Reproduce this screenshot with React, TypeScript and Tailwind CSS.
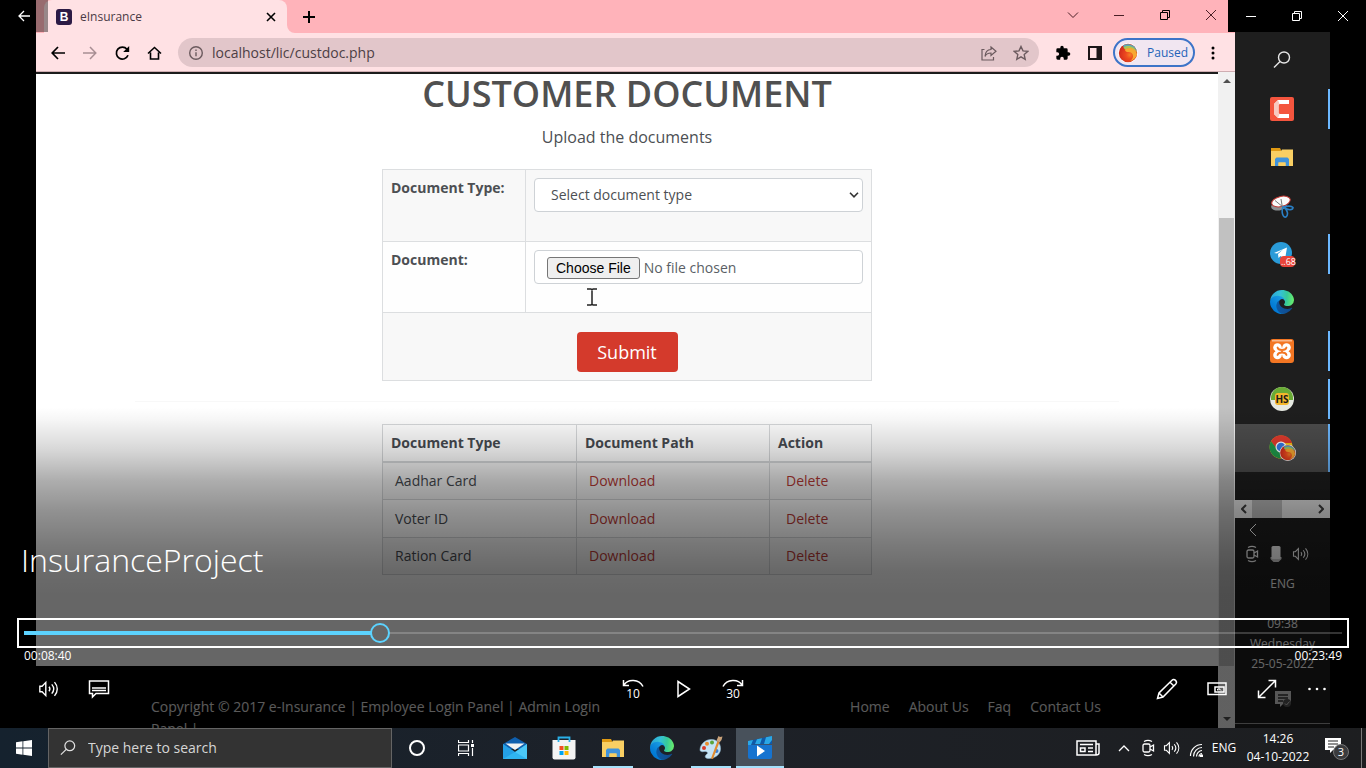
import React, { useState } from "react";
import type { ReactNode } from "react";

type IconProps = { className?: string };

/* ---------- shared drawings ---------- */

function EdgeLogo({ className = "size-6", id }: IconProps & { id: string }) {
  return (
    <svg className={className} viewBox="0 0 256 256" aria-hidden="true">
      <defs>
        <linearGradient id={`${id}a`} x1="60" y1="178" x2="232" y2="178" gradientUnits="userSpaceOnUse">
          <stop offset="0" stopColor="#0c59a4" />
          <stop offset="1" stopColor="#114a8b" />
        </linearGradient>
        <linearGradient id={`${id}b`} x1="157" y1="100" x2="46" y2="221" gradientUnits="userSpaceOnUse">
          <stop offset="0" stopColor="#1b9de2" />
          <stop offset=".2" stopColor="#1595df" />
          <stop offset=".7" stopColor="#0680d7" />
          <stop offset="1" stopColor="#0078d4" />
        </linearGradient>
        <linearGradient id={`${id}c`} x1="10" y1="60" x2="250" y2="90" gradientUnits="userSpaceOnUse">
          <stop offset="0" stopColor="#2aa6d6" />
          <stop offset=".4" stopColor="#35c1d6" />
          <stop offset=".7" stopColor="#36c99a" />
          <stop offset="1" stopColor="#66eb6e" />
        </linearGradient>
      </defs>
      <path fill={`url(#${id}a)`} d="M231.05 190.54c-3.38 1.76-6.86 3.33-10.42 4.7a101.16 101.16 0 0 1-35.62 6.46c-46.95 0-87.84-32.3-87.84-73.74a31.32 31.32 0 0 1 16.33-27.26c-42.46 1.78-53.37 46.03-53.37 71.95 0 73.3 67.55 80.73 82.1 80.73 7.85 0 19.68-2.28 26.78-4.53l1.3-.43a128.34 128.34 0 0 0 66.6-52.8 4 4 0 0 0-5.86-5.08z" />
      <path fill={`url(#${id}b)`} d="M105.73 241.42a79.2 79.2 0 0 1-22.74-21.34 80.72 80.72 0 0 1 29.53-120c3.12-1.47 8.45-4.13 15.54-4a32.35 32.35 0 0 1 25.68 13.06 31.88 31.88 0 0 1 6.36 18.66c0-.21 24.46-79.6-80-79.6-43.9 0-80 41.66-80 78.21a130.15 130.15 0 0 0 12.12 56 128 128 0 0 0 156.38 67.11 75.55 75.55 0 0 1-62.78-8.04z" />
      <path fill={`url(#${id}c)`} d="M152.33 148.86c-.8 1.05-3.3 2.5-3.3 5.66 0 2.6 1.7 5.12 4.72 7.22 14.38 10 41.49 8.69 41.56 8.69a59.57 59.57 0 0 0 30.26-8.35A61.38 61.38 0 0 0 256 109.3c.26-22.41-8-37.31-11.34-43.9C223.47 23.96 177.72 0 128 0A128 128 0 0 0 0 126.2c.48-36.54 36.8-66.05 80-66.05 3.5 0 23.46.34 42 10.07 16.34 8.58 24.9 18.94 30.85 29.21 6.18 10.67 7.28 24.15 7.28 29.52s-2.74 13.33-7.8 19.91z" />
    </svg>
  );
}

function FolderIcon({ className = "h-6 w-6" }: IconProps) {
  return (
    <svg className={className} viewBox="0 0 24 24" aria-hidden="true">
      <path fill="#e09a13" d="M1 3h9l1 2v5H1z" />
      <path fill="#f9cf63" d="M1 6h10l1-1.500h11V21H1z" />
      <path fill="#3f93dc" d="M5 21v-7l1.500-1.500h11L19 14v7h-3.500v-3.500h-7V21z" />
      <path fill="#f9cf63" d="M8.500 17.500h7V21h-7z" />
    </svg>
  );
}

function SwirlBall({ id }: { id: string }) {
  return (
    <g>
      <defs>
        <radialGradient id={id} cx=".6" cy=".6" r=".62">
          <stop offset="0" stopColor="#f57c22" />
          <stop offset=".35" stopColor="#ee4a1f" />
          <stop offset="1" stopColor="#cf2a1c" />
        </radialGradient>
      </defs>
      <circle cx="10" cy="10" r="10" fill="#fff" />
      <circle cx="10" cy="10" r="9.200" fill={`url(#${id})`} />
      <path fill="#5aa9b8" d="M5 2.500C9-.2 17 .8 19 8c-4-5-9-5.500-13-3z" />
      <path fill="#a9c558" d="M5.500 4.500C10 1.500 17 3 19.200 9.500c-4-4.500-8-5-12.200-3z" />
      <path fill="#f7a830" d="M7 6.500c5-3 11-1 12 5-1.500 4-4 6-7 6.500 5-3 3.500-9-1.500-9C8.500 9 7 8.500 7 6.500z" />
    </g>
  );
}

function VolumeIcon({ className = "h-5 w-6" }: IconProps) {
  return (
    <svg className={className} viewBox="0 0 24 20" fill="none" stroke="currentColor" strokeWidth="1.500" aria-hidden="true">
      <path d="M2 7h2.500l4-4.200v14.400l-4-4.200H2z" />
      <path d="M12 7.500c1.200 1.500 1.200 3.500 0 5M15 5c2.600 3 2.600 7 0 10M18 2.500c4 4.500 4 10.500 0 15" />
    </svg>
  );
}

function SearchIcon({ className }: IconProps) {
  return (
    <svg className={className} viewBox="0 0 18 18" fill="none" stroke="currentColor" strokeWidth="1.400" aria-hidden="true">
      <circle cx="11" cy="6.500" r="5.500" />
      <path d="M7 10.500l-6 6" />
    </svg>
  );
}

function MeetNowIcon({ className = "h-5 w-4" }: IconProps) {
  return (
    <svg className={className} viewBox="0 0 16 20" fill="none" stroke="currentColor" strokeWidth="1.300" aria-hidden="true">
      <rect x="3" y="6" width="7" height="8" rx="1.500" />
      <path d="M10 9l3.500-2v6L10 11M4 3.500c2.500-1.400 5.500-1.400 8 0M4 16.500c2.500 1.400 5.500 1.400 8 0" />
    </svg>
  );
}

function RestoreIcon() {
  return (
    <svg className="size-3" viewBox="0 0 12 12" fill="none" stroke="currentColor" aria-hidden="true">
      <path d="M1.500 3.500h7v7h-7zM3.500 3.500v-2h7v7h-2" />
    </svg>
  );
}

function CloseIcon() {
  return (
    <svg className="size-3" viewBox="0 0 12 12" fill="none" stroke="currentColor" aria-hidden="true">
      <path d="M1 1l10 10M11 1L1 11" />
    </svg>
  );
}

function MinusIcon() {
  return (
    <svg className="size-3" viewBox="0 0 12 12" stroke="currentColor" aria-hidden="true">
      <path d="M1 6.500h10" />
    </svg>
  );
}

/* ---------- browser ---------- */

function PlainButton({ label, className = "", children }: { label: string; className?: string; children: ReactNode }) {
  return (
    <button type="button" aria-label={label} className={`flex shrink-0 items-center justify-center ${className}`}>
      {children}
    </button>
  );
}

function TabStrip() {
  return (
    <div className="flex h-[33px] items-stretch bg-[#ffb3ba] pl-2">
      <div className="relative flex w-[243px] items-center gap-2 rounded-t-lg bg-[#ffe1e4] pt-px pr-2.5 pl-3">
        <span className="flex size-4 items-center justify-center rounded-[3px] bg-[#2c1a45] font-['Liberation_Sans',sans-serif] text-xs font-bold text-white">B</span>
        <span className="flex-1 text-xs text-[#4a3a45]">eInsurance</span>
        <PlainButton label="Close tab" className="size-3 text-black">
          <svg className="size-3" viewBox="0 0 12 12" stroke="currentColor" strokeWidth="1.600" aria-hidden="true">
            <path d="M2 2l8 8M10 2l-8 8" />
          </svg>
        </PlainButton>
        <svg className="absolute bottom-0 left-full size-2" viewBox="0 0 8 8" aria-hidden="true">
          <path fill="#ffe1e4" d="M0 0a8 8 0 0 0 8 8H0z" />
        </svg>
      </div>
      <PlainButton label="New tab" className="w-11 text-black">
        <svg className="size-3.5" viewBox="0 0 14 14" stroke="currentColor" strokeWidth="2" aria-hidden="true">
          <path d="M7 1v12M1 7h12" />
        </svg>
      </PlainButton>
      <div className="flex flex-1 items-center justify-end pr-px pb-1 text-[#4a1f26]">
        <PlainButton label="Search tabs" className="w-[46px]">
          <svg className="h-2 w-3" viewBox="0 0 12 8" fill="none" stroke="currentColor" aria-hidden="true">
            <path d="M1 1.500l5 5 5-5" />
          </svg>
        </PlainButton>
        <PlainButton label="Minimize browser" className="w-[46px]"><MinusIcon /></PlainButton>
        <PlainButton label="Restore browser" className="w-[46px] text-black"><RestoreIcon /></PlainButton>
        <PlainButton label="Close browser" className="w-[46px]"><CloseIcon /></PlainButton>
      </div>
    </div>
  );
}

function Toolbar() {
  return (
    <div className="flex h-[39px] items-center border-b border-[#cfaeb2] bg-[#ffe1e4] pt-px pr-4 pl-1.5 text-black">
      <PlainButton label="Back" className="w-8">
        <svg className="size-3.5" viewBox="0 0 14 14" fill="none" stroke="currentColor" strokeWidth="1.700" aria-hidden="true">
          <path d="M14 7H1.500M7 1L1.200 7 7 13" />
        </svg>
      </PlainButton>
      <PlainButton label="Forward" className="w-8 text-[#a88e93]">
        <svg className="size-3.5" viewBox="0 0 14 14" fill="none" stroke="currentColor" strokeWidth="1.500" aria-hidden="true">
          <path d="M0 7h12.500M7 1l5.800 6L7 13" />
        </svg>
      </PlainButton>
      <PlainButton label="Reload" className="w-8">
        <svg className="size-4" viewBox="0 0 16 16" fill="none" stroke="currentColor" strokeWidth="1.700" aria-hidden="true">
          <path d="M14 10.200A6 6 0 1 1 13 4.200" />
          <path d="M15.200 1v6H9.200z" fill="currentColor" stroke="none" />
        </svg>
      </PlainButton>
      <PlainButton label="Home" className="w-8">
        <svg className="size-4" viewBox="0 0 16 16" fill="none" stroke="currentColor" strokeWidth="1.600" aria-hidden="true">
          <path d="M2 8.500l6.500-6 6.500 6M4.500 7.500V14h8V7.500" />
        </svg>
      </PlainButton>
      <div className="ml-2 flex h-[29px] min-w-0 flex-1 items-center gap-2 rounded-full bg-[#e2c6ca] pr-2.5 pl-2.5 text-[#6b5a5e]">
        <svg className="size-4 shrink-0" viewBox="0 0 16 16" fill="none" stroke="currentColor" strokeWidth="1.400" aria-hidden="true">
          <circle cx="8" cy="8" r="6.300" />
          <path d="M8 7.200v4M8 4.600v1.400" />
        </svg>
        <input aria-label="Address" defaultValue="localhost/lic/custdoc.php" className="min-w-0 flex-1 bg-transparent text-sm text-[#4d3f45] outline-none" />
        <PlainButton label="Share" className="w-8">
          <svg className="size-4" viewBox="0 0 16 16" fill="none" stroke="currentColor" strokeWidth="1.200" aria-hidden="true">
            <path d="M3.500 4.500H1V15h11.500v-3M10 2l5 4.200-5 4.300V8c-3 0-5 1-6 3.500C4.200 7.500 6.500 4.700 10 4.500z" />
          </svg>
        </PlainButton>
        <PlainButton label="Bookmark" className="w-4">
          <svg className="size-4" viewBox="0 0 16 16" fill="none" stroke="currentColor" strokeWidth="1.400" aria-hidden="true">
            <path d="M8 1.500l2 4.400 4.700.5-3.500 3.200 1 4.700L8 11.900l-4.200 2.400 1-4.700L1.300 6.400l4.700-.5z" />
          </svg>
        </PlainButton>
      </div>
      <PlainButton label="Extensions" className="ml-2 w-8">
        <svg className="size-4" viewBox="0 0 24 24" fill="currentColor" aria-hidden="true">
          <path d="M20.500 11H19V7a2 2 0 0 0-2-2h-4V3.500a2.500 2.500 0 0 0-5 0V5H4a2 2 0 0 0-2 2v3.800h1.500a2.700 2.700 0 0 1 0 5.400H2V20a2 2 0 0 0 2 2h3.800v-1.500a2.700 2.700 0 0 1 5.400 0V22H17a2 2 0 0 0 2-2v-4h1.500a2.500 2.500 0 0 0 0-5z" />
        </svg>
      </PlainButton>
      <PlainButton label="Side panel" className="w-8">
        <svg className="size-4" viewBox="0 0 16 16" aria-hidden="true">
          <path fill="#1c1618" d="M1 1h14v14H1zM3 3v10h6.500V3z" fillRule="evenodd" />
        </svg>
      </PlainButton>
      <button type="button" className="ml-0.5 flex h-[29px] w-[82px] shrink-0 items-center gap-2 rounded-full border-2 border-[#3d74c8] bg-[#f1e6f1] pl-0.5 text-xs text-[#2463b8]">
        <svg className="size-[22px] shrink-0" viewBox="-1 -1 22 22" aria-hidden="true"><SwirlBall id="avatar" /></svg>
        Paused
      </button>
      <PlainButton label="Browser menu" className="ml-3 w-3">
        <svg className="h-4 w-1" viewBox="0 0 4 16" fill="currentColor" aria-hidden="true">
          <circle cx="2" cy="3" r="1.500" /><circle cx="2" cy="8" r="1.500" /><circle cx="2" cy="13" r="1.500" />
        </svg>
      </PlainButton>
    </div>
  );
}

const documents = ["Aadhar Card", "Voter ID", "Ration Card"];

function DocumentPage() {
  return (
    <div className="flex min-w-0 flex-1 flex-col overflow-hidden border-t-2 border-[#1c1c1c] bg-white font-['Open_Sans',sans-serif] text-[#4c4f53]">
      <main className="mx-auto flex w-full max-w-[984px] shrink-0 flex-col items-center pb-[91px]">
        <h2 className="text-4xl leading-10 font-semibold text-[#505050]">CUSTOMER DOCUMENT</h2>
        <p className="mt-[11px] text-base leading-6">Upload the documents</p>
        <form className="mt-5 w-[490px]" onSubmit={(e) => e.preventDefault()}>
          <table className="w-full table-fixed border-collapse border border-[#d9dbdd] text-sm">
            <colgroup><col className="w-[143px]" /><col /></colgroup>
            <tbody className="align-top">
              <tr className="h-[72px] bg-[#f8f8f8]">
                <th scope="row" className="border border-[#dcdee0] p-2 text-left font-bold">
                  <label htmlFor="doctype">Document Type:</label>
                </th>
                <td className="border border-[#dcdee0] p-2">
                  <div className="relative">
                    <select id="doctype" className="block h-[34px] w-full appearance-none rounded border border-[#ced2d6] bg-white px-4 text-sm">
                      <option>Select document type</option>
                      {documents.map((d) => <option key={d}>{d}</option>)}
                    </select>
                    <svg className="pointer-events-none absolute top-3.5 right-1 h-1.5 w-2.5" viewBox="0 0 10 6" fill="none" stroke="#333" strokeWidth="1.600" aria-hidden="true">
                      <path d="M1 .8l4 4 4-4" />
                    </svg>
                  </div>
                </td>
              </tr>
              <tr className="h-[71px] bg-[#fefefe]">
                <th scope="row" className="border border-[#dcdee0] p-2 text-left font-bold">
                  <label htmlFor="docfile">Document:</label>
                </th>
                <td className="relative border border-[#dcdee0] p-2">
                  <input
                    id="docfile"
                    type="file"
                    className="block h-[34px] w-full rounded border border-[#ced2d6] bg-white px-3 py-1.5 text-sm leading-5 text-[#5a5f66] file:mr-1 file:h-[22px] file:rounded-[3px] file:border file:border-solid file:border-[#767676] file:bg-[#efefef] file:px-2 file:font-['Liberation_Sans',sans-serif] file:text-sm file:leading-5 file:text-black"
                  />
                  <svg className="absolute top-[46px] left-[60px] h-[18px] w-3" viewBox="0 0 12 18" fill="none" stroke="#222" strokeWidth="1.500" aria-hidden="true">
                    <path d="M1 1h4l1 1 1-1h4M6 1.500v15M1 17h4l1-1 1 1h4" />
                  </svg>
                </td>
              </tr>
              <tr className="h-[68px] bg-[#f8f8f8]">
                <td colSpan={2} className="border border-[#dcdee0] pt-[19px] text-center">
                  <button type="submit" className="h-10 w-[101px] rounded bg-[#d43a2c] text-lg text-white">Submit</button>
                </td>
              </tr>
            </tbody>
          </table>
        </form>
        <hr className="mt-5 w-full border-[#f8f8f8]" />
        <table className="mt-[22px] w-[490px] table-fixed border-collapse border border-[#d6d8da] text-left text-sm text-[#464a50]">
          <thead>
            <tr className="h-[37px]">
              <th className="w-[194px] border border-b-2 border-[#d6d8da] px-2 font-bold">Document Type</th>
              <th className="w-[193px] border border-b-2 border-[#d6d8da] px-2 font-bold">Document Path</th>
              <th className="border border-b-2 border-[#d6d8da] px-2 font-bold">Action</th>
            </tr>
          </thead>
          <tbody>
            {documents.map((d) => (
              <tr key={d} className="h-[38px] last:h-[37px] odd:bg-[#f8f8f8]">
                <td className="border border-[#d6d8da] px-3">{d}</td>
                <td className="border border-[#d6d8da] px-3"><a href="#download" className="text-[#b93a36]">Download</a></td>
                <td className="border border-[#d6d8da] px-4"><a href="#delete" className="text-[#b93a36]">Delete</a></td>
              </tr>
            ))}
          </tbody>
        </table>
      </main>
      <footer className="flex-1 overflow-hidden bg-black pt-[30px] text-[#e0e0e0]">
        <div className="mx-auto flex max-w-[984px] items-start justify-between px-4 text-sm leading-[22px]">
          <p className="w-[470px]">
            Copyright © 2017 e-Insurance | <a href="#employee">Employee Login Panel</a> | <a href="#admin">Admin Login Panel</a> |
          </p>
          <nav className="flex gap-[19px] pr-0.5">
            <a href="#home">Home</a>
            <a href="#about">About Us</a>
            <a href="#faq">Faq</a>
            <a href="#contact">Contact Us</a>
          </nav>
        </div>
      </footer>
    </div>
  );
}

function PageScrollbar() {
  return (
    <div className="flex w-[17px] shrink-0 flex-col items-center bg-[#f1f1f1] text-[#505050]">
      <svg className="mt-1.5 h-1.5 w-2" viewBox="0 0 8 6" fill="currentColor" aria-hidden="true"><path d="M0 5l4-4 4 4z" /></svg>
      <div className="mt-[134px] mb-[50px] w-[15px] flex-1 bg-[#c1c1c1]" />
      <svg className="mb-1.5 h-1.5 w-2" viewBox="0 0 8 6" fill="currentColor" aria-hidden="true"><path d="M0 1l4 4 4-4z" /></svg>
    </div>
  );
}

function Browser() {
  return (
    <section className="flex min-w-0 flex-1 flex-col">
      <TabStrip />
      <Toolbar />
      <div className="flex min-h-0 flex-1">
        <DocumentPage />
        <PageScrollbar />
      </div>
    </section>
  );
}

/* ---------- vertical taskbar of the recorded desktop ---------- */

function CamtasiaIcon() {
  return (
    <svg className="size-6" viewBox="0 0 24 24" aria-hidden="true">
      <rect width="24" height="24" rx="2" fill="#f4553e" />
      <path fill="#fff" d="M8 3h11v4H9.500L8.500 8v8l1 1H19v4H8l-4-4V7z" />
      <path fill="#f8c9c0" d="M4 7l4-4 1.500 4-1 1v8l1 1L8 21l-4-4z" />
    </svg>
  );
}

function SnipIcon() {
  return (
    <svg className="size-6" viewBox="0 0 24 24" aria-hidden="true">
      <ellipse cx="9" cy="12" rx="8" ry="4.500" fill="#8b8f92" transform="rotate(-8 9 12)" />
      <ellipse cx="11" cy="7.500" rx="9.500" ry="5" fill="#fbfbfb" stroke="#c33a34" transform="rotate(-14 11 7.500)" />
      <path d="M12.500 14L11 5M13 13L5 6.500" stroke="#777" />
      <path d="M13 13c4-1 8-2 10 .5 0 3-5 3-9 0 3 2 5 7 2 9.500-3 1-5-5-3-10z" fill="none" stroke="#2a7fc4" strokeWidth="1.600" />
    </svg>
  );
}

function TelegramIcon() {
  return (
    <svg className="size-7" viewBox="0 0 28 28" aria-hidden="true">
      <circle cx="13" cy="13" r="11" fill="#2a9bd8" />
      <path fill="#fff" d="M6 13l13-5.500-2 12-4.500-3.500-2 2-.5-4 5-4.500-6 4z" />
      <rect x="12" y="16" width="15" height="11" rx="4" fill="#e8443a" />
      <text x="13" y="25" fill="#fff" fontSize="9" fontFamily="Open Sans">..68</text>
    </svg>
  );
}

function XamppIcon() {
  return (
    <svg className="size-6" viewBox="0 0 24 24" aria-hidden="true">
      <rect width="24" height="24" rx="3" fill="#f37623" />
      <path d="M2 1.800h20" stroke="#fbc9a4" strokeWidth="1.200" />
      <g fill="#fff">
        <circle cx="7.500" cy="8.500" r="4.300" /><circle cx="16.500" cy="8.500" r="4.300" />
        <circle cx="7.500" cy="16" r="4.300" /><circle cx="16.500" cy="16" r="4.300" />
        <path d="M7 9h10v7H7z" />
      </g>
      <path d="M7.500 8.500c.5 2 1.500 2.500 4.500 2.500s4-.5 4.500-2.500M7.500 16c.5-2 1.500-2.500 4.500-2.500s4 .5 4.500 2.500M12 11v2.500" fill="none" stroke="#f37623" strokeWidth="1.800" strokeLinecap="round" />
      <path fill="#f37623" d="M2.500 12.200l2.500-.8v1.700zM21.500 12.200l-2.500-.8v1.700z" />
    </svg>
  );
}

function HeidiIcon() {
  return (
    <svg className="size-6" viewBox="0 0 24 24" aria-hidden="true">
      <circle cx="12" cy="12" r="12" fill="#e6e9e2" />
      <path fill="#69ab35" d="M1 11a11 11 0 0 1 22 0v2H1z" />
      <rect x="5" y="6" width="14" height="12" rx="3" fill="#f3b72c" />
      <text x="12" y="16" textAnchor="middle" fontSize="10" fontWeight="700" fontFamily="Open Sans" fill="#1a1a1a">HS</text>
    </svg>
  );
}

function ChromeIcon() {
  return (
    <svg className="size-7" viewBox="0 0 28 28" aria-hidden="true">
      <circle cx="13" cy="13" r="11.500" fill="#fbc116" />
      <path fill="#e33b2e" d="M3 7.300A11.500 11.500 0 0 1 24 9H13a5 5 0 0 0-4.500 6z" />
      <path fill="#1f9a4b" d="M3 7.300A11.500 11.500 0 0 0 12 24.500L17 16l-8-1z" />
      <circle cx="13" cy="13" r="5.500" fill="#fff" />
      <circle cx="13" cy="13" r="4.300" fill="#3579e6" />
      <svg x="11.500" y="10.500" width="16.500" height="16.500" viewBox="0 0 20 20"><SwirlBall id="badge" /></svg>
    </svg>
  );
}

const sideApps: { name: string; icon: ReactNode; open?: boolean; active?: boolean }[] = [
  { name: "Search", icon: <SearchIcon className="size-[18px] text-[#e5e5e5]" /> },
  { name: "Camtasia", icon: <CamtasiaIcon />, open: true },
  { name: "File Explorer", icon: <FolderIcon /> },
  { name: "Snipping Tool", icon: <SnipIcon /> },
  { name: "Telegram", icon: <TelegramIcon />, open: true },
  { name: "Edge", icon: <EdgeLogo id="side" /> },
  { name: "XAMPP", icon: <XamppIcon />, open: true },
  { name: "HeidiSQL", icon: <HeidiIcon />, open: true },
  { name: "Chrome", icon: <ChromeIcon />, active: true },
];

function SideTaskbar() {
  return (
    <aside className="flex w-[95px] shrink-0 flex-col bg-[#1e1e1e] pt-9 text-white">
      <div className="flex h-[436px] shrink-0 flex-col">
        {sideApps.map((app) => (
          <button
            key={app.name}
            type="button"
            aria-label={app.name}
            className={`flex flex-1 items-center ${app.active ? "bg-[#4c4c4c]" : ""}`}
          >
            <span className="flex flex-1 justify-center">{app.icon}</span>
            <span className={`w-0.5 ${app.active ? "h-full bg-[#6cb8ff]" : app.open ? "h-10 bg-[#6cb8ff]" : "h-10"}`} />
          </button>
        ))}
      </div>
      <div className="mt-7 flex h-[18px] shrink-0 items-center justify-between bg-[#f1f1f1] px-1.5 text-[#404040]">
        <svg className="h-2.5 w-1.5" viewBox="0 0 6 10" fill="none" stroke="currentColor" strokeWidth="2" aria-hidden="true"><path d="M5 1L1 5l4 4" /></svg>
        <span className="mr-8 h-full w-[30px] bg-[#c1c1c1]" />
        <svg className="h-2.5 w-1.5" viewBox="0 0 6 10" fill="none" stroke="currentColor" strokeWidth="2" aria-hidden="true"><path d="M1 1l4 4-4 4" /></svg>
      </div>
      <div className="flex flex-1 flex-col items-center pt-1.5">
        <svg className="mr-[60px] h-3 w-2 shrink-0" viewBox="0 0 8 12" fill="none" stroke="currentColor" aria-hidden="true"><path d="M7 0L1 6l6 6" /></svg>
        <div className="mt-2 mr-3 flex items-center gap-2">
          <MeetNowIcon />
          <svg className="h-5 w-4" viewBox="0 0 16 20" fill="currentColor" aria-hidden="true">
            <rect x="3.500" y="2" width="9" height="13" rx="1.500" /><path d="M2.500 13h11v2l-3 3h-5l-3-3z" opacity=".8" />
          </svg>
          <VolumeIcon className="h-4 w-[18px]" />
        </div>
        <span className="mt-2.5 text-xs leading-5">ENG</span>
        <time className="mt-5 text-center text-xs leading-5">09:38<br />Wednesday<br />25-05-2022</time>
        <svg className="mt-4 h-[18px] w-[18px] shrink-0" viewBox="0 0 18 18" aria-hidden="true">
          <path fill="#d8d8d8" d="M1 1h16v13H9l-3 3v-3H1z" />
          <path stroke="#333" strokeWidth="1.300" d="M4 5h10M4 8h10M4 11h5" />
          <circle cx="13" cy="13" r="4" fill="#555" />
          <path d="M11 13.500l1.500 1.500 3-3.500" stroke="#ccc" fill="none" />
        </svg>
        <span className="mt-auto mb-1 h-px w-full shrink-0 bg-[#9a9a9a]" />
      </div>
    </aside>
  );
}

/* ---------- player overlay ---------- */

function SkipIcon({ seconds, forward = false }: { seconds: number; forward?: boolean }) {
  return (
    <svg className="size-6" viewBox="0 0 24 24" fill="none" stroke="currentColor" strokeWidth="1.500" aria-hidden="true">
      {forward ? <path d="M2 9.500C6 2 17 1.500 21 8M21.500 3v5.500H16" /> : <path d="M22 9.500C18 2 7 1.500 3 8M2.500 3v5.500H8" />}
      <text x="12" y="21" textAnchor="middle" fontSize="12" fontFamily="Open Sans" fontWeight="500" fill="currentColor" stroke="none">{seconds}</text>
    </svg>
  );
}

function PlayerButton({ label, children }: { label: string; children: ReactNode }) {
  return (
    <button type="button" aria-label={label} className="flex h-[52px] w-[50px] items-center justify-center">
      {children}
    </button>
  );
}

function PlayerOverlay() {
  const total = 1949;
  const [position, setPosition] = useState(520);
  return (
    <div className="absolute inset-0 flex flex-col justify-between text-white">
      <div className="flex h-8 justify-between">
        <button type="button" aria-label="Back" className="flex w-12 items-center justify-center bg-black/40">
          <svg className="size-3" viewBox="0 0 12 12" fill="none" stroke="currentColor" strokeWidth="1.300" aria-hidden="true">
            <path d="M12 6H1M6 1L1 6l5 5" />
          </svg>
        </button>
        <div className="flex bg-black">
          <PlainButton label="Minimize" className="w-[46px]"><MinusIcon /></PlainButton>
          <PlainButton label="Restore" className="w-[46px]"><RestoreIcon /></PlainButton>
          <PlainButton label="Close" className="w-[46px]"><CloseIcon /></PlainButton>
        </div>
      </div>
      <div className="flex h-[334px] flex-col justify-end bg-[linear-gradient(to_bottom,rgba(0,0,0,0)_4%,rgba(0,0,0,0.04)_8%,rgba(0,0,0,0.16)_17%,rgba(0,0,0,0.32)_26%,rgba(0,0,0,0.43)_35%,rgba(0,0,0,0.52)_45%,rgba(0,0,0,0.58)_53%,rgba(0,0,0,0.6)_60%)]">
        <h1 className="px-[21px] text-[32px] leading-10 font-light">InsuranceProject</h1>
        <div className="mx-[17px] mt-[38px] h-[30px] border-2 border-white px-[5px]">
          <div className="relative flex h-full items-center">
            <div className="h-1 bg-[#5cd3ff]" style={{ width: `${(position / total) * 98.6}%` }} />
            <div className="h-0.5 flex-1 bg-white/20" />
            <input
              type="range"
              aria-label="Seek"
              min={0}
              max={total}
              value={position}
              onChange={(e) => setPosition(Number(e.target.value))}
              className="absolute inset-0 w-full appearance-none bg-transparent [&::-webkit-slider-thumb]:size-5 [&::-webkit-slider-thumb]:appearance-none [&::-webkit-slider-thumb]:rounded-full [&::-webkit-slider-thumb]:border-2 [&::-webkit-slider-thumb]:border-[#5cd3ff] [&::-webkit-slider-thumb]:bg-[#666]"
            />
          </div>
        </div>
        <div className="flex justify-between px-6 text-xs leading-[15px]">
          <span>00:08:40</span>
          <span>00:23:49</span>
        </div>
        <div className="grid h-[65px] grid-cols-[1fr_auto_1fr] items-start px-6">
          <div className="flex">
            <PlayerButton label="Volume"><VolumeIcon className="h-5 w-[22px]" /></PlayerButton>
            <PlayerButton label="Subtitles">
              <svg className="h-5 w-[22px]" viewBox="0 0 22 20" fill="none" stroke="currentColor" strokeWidth="1.500" aria-hidden="true">
                <path d="M1.500 2h19v12.500H8L4.500 18v-3.500h-3zM4 9h14M4 11.500h14" />
              </svg>
            </PlayerButton>
          </div>
          <div className="flex">
            <PlayerButton label="Skip back 10 seconds"><SkipIcon seconds={10} /></PlayerButton>
            <PlayerButton label="Play">
              <svg className="h-5 w-4" viewBox="0 0 16 20" fill="none" stroke="currentColor" strokeWidth="1.500" aria-hidden="true">
                <path d="M3 2.500v15L14.500 10z" />
              </svg>
            </PlayerButton>
            <PlayerButton label="Skip forward 30 seconds"><SkipIcon seconds={30} forward /></PlayerButton>
          </div>
          <div className="flex justify-end">
            <PlayerButton label="Edit">
              <svg className="size-[22px]" viewBox="0 0 22 22" fill="none" stroke="currentColor" strokeWidth="1.500" aria-hidden="true">
                <path d="M1.500 20.500L3 15 16 2.200c1-1 2.500-.8 3.500.2s1.200 2.500.3 3.500L7 19zM14 4.200L18 8M3 15l4 4" />
              </svg>
            </PlayerButton>
            <PlayerButton label="Mini view">
              <svg className="h-4 w-5" viewBox="0 0 20 16" fill="none" stroke="currentColor" strokeWidth="1.500" aria-hidden="true">
                <path d="M1 2h18v11.500H1z" /><path d="M8 6h9v5H8z" /><path d="M10.500 9.500V8H13M14 9.500L12.500 8" strokeWidth="1" />
              </svg>
            </PlayerButton>
            <PlayerButton label="Full screen">
              <svg className="size-5" viewBox="0 0 20 20" fill="none" stroke="currentColor" strokeWidth="1.500" aria-hidden="true">
                <path d="M1.500 18.500l17-17M11.500 1.500h7v7M1.500 11.500v7h7" />
              </svg>
            </PlayerButton>
            <PlayerButton label="More">
              <svg className="h-1 w-5" viewBox="0 0 20 4" fill="currentColor" aria-hidden="true">
                <circle cx="2.500" cy="2" r="1.300" /><circle cx="10" cy="2" r="1.300" /><circle cx="17.500" cy="2" r="1.300" />
              </svg>
            </PlayerButton>
          </div>
        </div>
      </div>
    </div>
  );
}

/* ---------- Windows taskbar ---------- */

function MailIcon() {
  return (
    <svg className="size-6" viewBox="0 0 24 24" aria-hidden="true">
      <path fill="#0f5fae" d="M0 8l12-7 12 7v5H0z" />
      <path fill="#2fb4f0" d="M0 8l12 8 12-8v15H0z" />
      <path fill="#1a8bdc" d="M0 23V8l12 8z" opacity=".5" />
      <path fill="#5fd6fb" d="M24 8v15L12 16z" opacity=".6" />
      <path fill="#f2f2f2" d="M2.500 7.500h19L12 14z" />
    </svg>
  );
}

function StoreIcon() {
  return (
    <svg className="size-6" viewBox="0 0 24 24" aria-hidden="true">
      <path fill="#f3f3f3" d="M.5 4h23v17.500a2 2 0 0 1-2 2h-19a2 2 0 0 1-2-2z" />
      <path d="M6.500 6V1.500h11V6" fill="none" stroke="#29b0e8" strokeWidth="1.800" />
      <path fill="#f25022" d="M7.500 10h4v4h-4z" /><path fill="#7fba00" d="M12.500 10h4v4h-4z" />
      <path fill="#00a4ef" d="M7.500 15h4v4h-4z" /><path fill="#ffb900" d="M12.500 15h4v4h-4z" />
    </svg>
  );
}

function PaintIcon() {
  return (
    <svg className="size-6" viewBox="0 0 24 24" aria-hidden="true">
      <path fill="#c5e3f5" stroke="#8fb6cf" strokeWidth=".6" d="M1 14C1 8 7 3 13 3.500c6 .5 9 5 8.500 10C21 19 15 23 9 22.500c-4-.5-3-3-1-4.500s-1-3-3-2.500-4 0-4-1.500z" />
      <circle cx="5" cy="12" r="2" fill="#d93a2b" /><circle cx="8" cy="7.800" r="2" fill="#e88e2e" />
      <circle cx="13" cy="6.500" r="2" fill="#5aa53c" /><circle cx="17.500" cy="15" r="2" fill="#3f7fd0" />
      <path fill="#e08a2e" d="M18.500 5l2 1-6.500 17-2-.500z" />
      <path fill="#c9a27a" d="M17.500 4.500L19.500 0l1.500 1 2.500-.5L22.500 4l-2 2.500z" />
    </svg>
  );
}

function MoviesIcon() {
  return (
    <svg className="size-6" viewBox="0 0 24 24" aria-hidden="true">
      <path fill="#1673cf" d="M0 9h24v12a2 2 0 0 1-2 2H2a2 2 0 0 1-2-2z" />
      <path fill="#0f59a8" d="M0 5l24-5v8L0 9z" />
      <path fill="#2aa7e6" d="M0 5l5-1-2 5H0zM9 3.200l5-1L12 8H7zM18 1.200L24 0v4l-3 4h-5z" />
      <path fill="#fff" d="M9 9.500v11l8-5.500z" />
    </svg>
  );
}

const pinned: { name: string; icon: ReactNode; open?: boolean; active?: boolean }[] = [
  { name: "Cortana", icon: <span className="size-4 rounded-full border-2 border-white" /> },
  {
    name: "Task view",
    icon: (
      <svg className="size-4" viewBox="0 0 16 16" fill="none" stroke="currentColor" strokeWidth="1.200" aria-hidden="true">
        <path d="M.5 0v2.500h10V0M.5 5h10v6H.5zM.5 16v-2.500h10V16M14.500 0v3M14.500 8v8" /><path d="M13 4h3v3h-3z" fill="currentColor" stroke="none" />
      </svg>
    ),
  },
  { name: "Mail", icon: <MailIcon /> },
  { name: "Store", icon: <StoreIcon /> },
  { name: "File Explorer", icon: <FolderIcon />, open: true },
  { name: "Edge", icon: <EdgeLogo id="dock" /> },
  { name: "Paint", icon: <PaintIcon />, open: true },
  { name: "Movies & TV", icon: <MoviesIcon />, active: true },
];

function Taskbar() {
  return (
    <footer className="flex h-10 shrink-0 items-stretch bg-linear-to-r from-[#15222e] via-[#1d2128] to-[#1d1e20] text-xs text-white">
      <PlainButton label="Start" className="w-12">
        <svg className="size-4" viewBox="0 0 16 16" fill="currentColor" aria-hidden="true">
          <path d="M0 2.200L6.500 1.300v6.200H0zM7.300 1.200L16 0v7.500H7.300zM0 8.400h6.500v6.300L0 13.800zM7.300 8.400H16V16l-8.700-1.200z" />
        </svg>
      </PlainButton>
      <label className="flex w-[344px] items-center gap-3 border border-[#646464] bg-[#333] pl-[11px]">
        <SearchIcon className="size-4 text-[#e0e0e0]" />
        <input aria-label="Search" placeholder="Type here to search" className="min-w-0 flex-1 bg-transparent text-sm placeholder:text-[#d6d6d6] outline-none" />
      </label>
      <nav className="flex gap-px pl-px">
        {pinned.map((app) => (
          <button
            key={app.name}
            type="button"
            aria-label={app.name}
            className={`flex w-12 flex-col items-center ${app.active ? "bg-[#48515b]" : ""}`}
          >
            <span className="flex flex-1 items-center pt-0.5">{app.icon}</span>
            <span className={`h-0.5 ${app.active ? "w-full bg-[#a5e1fb]" : app.open ? "w-10 bg-[#a5e1fb]" : "w-10"}`} />
          </button>
        ))}
      </nav>
      <div className="ml-auto flex items-stretch">
        <PlainButton label="News" className="w-12">
          <svg className="h-4 w-6" viewBox="0 0 24 16" fill="none" stroke="currentColor" strokeWidth="1.500" aria-hidden="true">
            <path d="M1 1h19v14H1zM20 4h3v9c0 1.500-1 2-3 2M4 4.500h13M12 8h5M12 11.500h5" /><path d="M4.500 8h4.500v3.500H4.500z" />
          </svg>
        </PlainButton>
        <PlainButton label="Show hidden icons" className="w-6">
          <svg className="h-2 w-3" viewBox="0 0 12 8" fill="none" stroke="currentColor" strokeWidth="1.300" aria-hidden="true"><path d="M1 7l5-5 5 5" /></svg>
        </PlainButton>
        <PlainButton label="Meet now" className="w-6"><MeetNowIcon /></PlainButton>
        <PlainButton label="Speakers" className="w-6"><VolumeIcon className="h-4 w-[18px]" /></PlainButton>
        <PlainButton label="Network" className="w-6">
          <svg className="mt-1 size-3.5" viewBox="0 0 14 14" fill="none" stroke="currentColor" strokeWidth="1.200" aria-hidden="true">
            <path d="M1.500 13C1.500 6.500 6.500 1.500 13 1.500M4.500 13.500C4.500 8.500 8.500 4.500 13 4.500M7.500 13.500c0-3 2.500-6 5.500-6M10 13.500c0-1.500 1.500-3 3-3" />
            <circle cx="12.500" cy="13" r="1.200" fill="currentColor" />
          </svg>
        </PlainButton>
        <PlainButton label="Input language" className="w-8">ENG</PlainButton>
        <time className="flex w-[76px] flex-col items-center justify-center text-xs leading-[18px]">
          <span>14:26</span>
          <span>04-10-2022</span>
        </time>
        <PlainButton label="Notifications" className="w-[45px] pr-1">
          <svg className="h-6 w-7" viewBox="0 0 28 24" aria-hidden="true">
            <path fill="#fff" d="M2 2h16v12h-8l-3 3v-3H2z" />
            <path stroke="#222" strokeWidth="1.200" d="M5 5h10M5 8h10M5 11h6" />
            <circle cx="18" cy="16" r="7.500" fill="#3a3b3d" stroke="#777" />
            <text x="18" y="20" textAnchor="middle" fontSize="11" fontFamily="Open Sans" fill="#fff">3</text>
          </svg>
        </PlainButton>
        <span className="w-[5px] border-l border-[#7a7a7a]" />
      </div>
    </footer>
  );
}

export default function App() {
  return (
    <div className="flex h-screen flex-col overflow-hidden bg-black font-['Open_Sans','Noto_Sans',sans-serif]">
      <div className="relative flex min-h-0 flex-1 px-9">
        <Browser />
        <SideTaskbar />
        <PlayerOverlay />
      </div>
      <Taskbar />
    </div>
  );
}
